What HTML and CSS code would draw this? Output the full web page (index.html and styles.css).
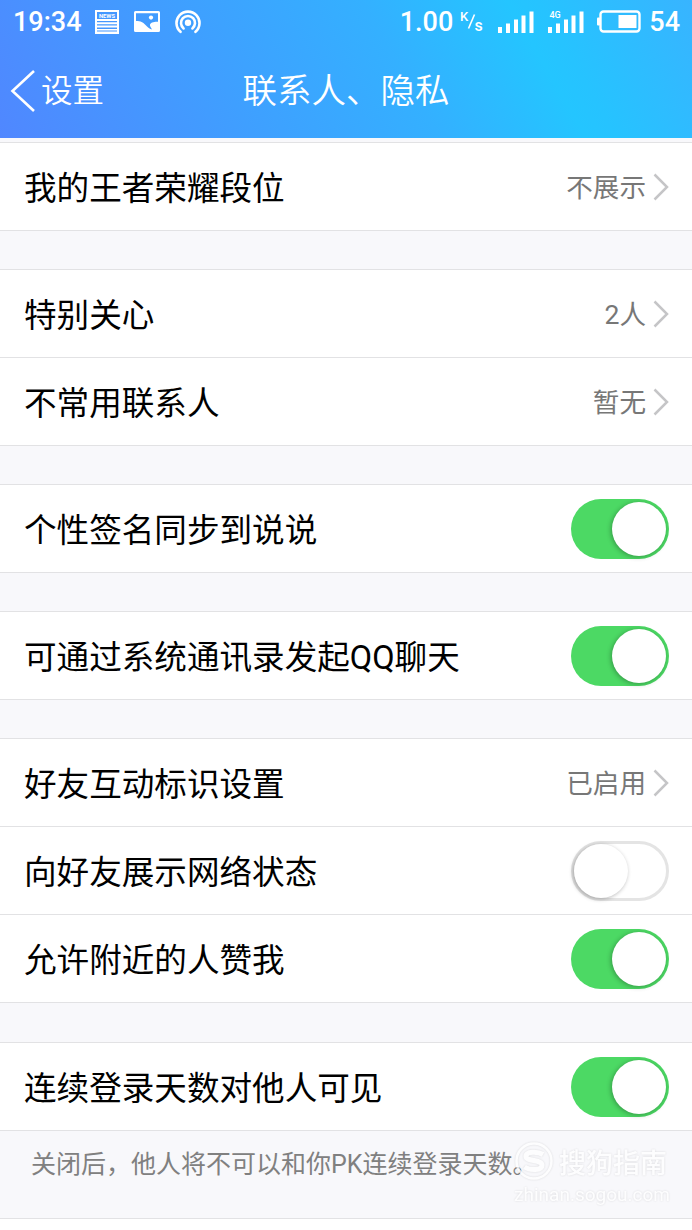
FILE: index.html
```html
<!DOCTYPE html>
<html lang="zh-CN">
<head>
  <meta charset="UTF-8" />
  <meta name="viewport" content="width=device-width, initial-scale=1.0"/>
  <title>联系人、隐私</title>
  <link rel="stylesheet" href="styles.css">
</head>
<body>
  <header class="header">
    <div class="status-bar">
      <div class="status-left">
        <span class="time">19:34</span>
        <svg class="icon-news" width="24" height="24" viewBox="0 0 24 24">
          <path fill="#fff" fill-rule="evenodd" d="M0 0h24v24H0zM2 2v7h20V2zM2 11v1.300h20v-1.300zM2 14.300v1.300h20v-1.300zM2 17.600v1.300h20v-1.300zM2 20.600v1h20v-1z"/>
          <text class="news-text" x="12" y="7.800" text-anchor="middle" textLength="16" lengthAdjust="spacingAndGlyphs">NEWS</text>
        </svg>
        <svg class="icon-picture" width="26" height="21" viewBox="0 0 26 21">
          <path fill="#fff" fill-rule="evenodd" d="M1.500 0h23q1.500 0 1.500 1.500v18q0 1.500-1.500 1.500h-23q-1.500 0-1.500-1.500v-18q0-1.500 1.500-1.500zM2 2.200v7.800C7 10 9 11.500 11 13.500C13 15.500 15 18 18 18.500C17 16 15.500 15 16 13.500C17 11 21 10.700 24 10.700V2.200z"/>
          <circle cx="17" cy="6.600" r="2.100" fill="#fff"/>
        </svg>
        <svg class="icon-cast" width="26" height="26" viewBox="0 0 26 26" fill="none" stroke="#fff" stroke-width="2.600" stroke-linecap="round">
          <path d="M5.500 22.800A11.500 11.500 0 1 1 20.500 22.800"/>
          <path d="M8.600 19.400A7 7 0 1 1 17.400 19.400"/>
          <circle cx="13" cy="13.800" r="3.200" fill="#fff" stroke="none"/>
        </svg>
      </div>
      <div class="status-right">
        <span class="speed">1.00</span>
        <svg class="unit" width="24" height="24" viewBox="0 0 24 24">
          <text x="0" y="10.500">K</text>
          <path d="M14.500 4.500L8.500 18.500" stroke="#fff" stroke-width="1.600"/>
          <text x="14.500" y="20.500" class="unit-s">s</text>
        </svg>
        <svg class="signal" width="36" height="24" viewBox="0 0 36 24" fill="#fff">
          <rect x="0" y="17" width="4" height="6"/>
          <rect x="8" y="13.500" width="4" height="9.500"/>
          <rect x="16" y="9.500" width="4" height="13.500"/>
          <rect x="23.500" y="5.500" width="4" height="17.500"/>
          <rect x="31.500" y="1.500" width="4" height="21.500"/>
        </svg>
        <svg class="signal signal-4g" width="36" height="24" viewBox="0 0 36 24" fill="#fff">
          <rect x="0" y="17" width="4" height="6"/>
          <rect x="8" y="13.500" width="4" height="9.500"/>
          <rect x="16" y="9.500" width="4" height="13.500"/>
          <rect x="23.500" y="5.500" width="4" height="17.500"/>
          <rect x="31.500" y="1.500" width="4" height="21.500"/>
          <text x="1.500" y="8">4G</text>
        </svg>
        <svg class="battery" width="44" height="23" viewBox="0 0 44 23">
          <rect x="3.500" y="1.500" width="39" height="20" rx="3" fill="none" stroke="#fff" stroke-width="2.400"/>
          <rect x="0" y="7.500" width="3" height="8" rx="1" fill="#fff"/>
          <rect x="21.500" y="5" width="18" height="13" fill="#fff"/>
        </svg>
        <span class="percent">54</span>
      </div>
    </div>
    <nav class="nav-bar">
      <div class="back">
        <svg width="26" height="42" viewBox="0 0 26 42" fill="none" stroke="#fff" stroke-width="2.600">
          <path d="M24 1L2.500 21L24 41"/>
        </svg>
        <span class="back-text">设置</span>
      </div>
      <h1 class="title">联系人、隐私</h1>
    </nav>
  </header>

  <main class="settings">
    <section class="group">
      <div class="row">
        <span class="label">我的王者荣耀段位</span>
        <span class="value">不展示</span>
        <svg class="arrow" width="16" height="28" viewBox="0 0 16 28"><path d="M1.500 1.500L14 14L1.500 26.500"/></svg>
      </div>
    </section>

    <section class="group">
      <div class="row">
        <span class="label">特别关心</span>
        <span class="value">2人</span>
        <svg class="arrow" width="16" height="28" viewBox="0 0 16 28"><path d="M1.500 1.500L14 14L1.500 26.500"/></svg>
      </div>
      <div class="row">
        <span class="label">不常用联系人</span>
        <span class="value">暂无</span>
        <svg class="arrow" width="16" height="28" viewBox="0 0 16 28"><path d="M1.500 1.500L14 14L1.500 26.500"/></svg>
      </div>
    </section>

    <section class="group">
      <div class="row">
        <span class="label">个性签名同步到说说</span>
        <span class="switch on"><span class="knob"></span></span>
      </div>
    </section>

    <section class="group">
      <div class="row">
        <span class="label">可通过系统通讯录发起QQ聊天</span>
        <span class="switch on"><span class="knob"></span></span>
      </div>
    </section>

    <section class="group">
      <div class="row">
        <span class="label">好友互动标识设置</span>
        <span class="value">已启用</span>
        <svg class="arrow" width="16" height="28" viewBox="0 0 16 28"><path d="M1.500 1.500L14 14L1.500 26.500"/></svg>
      </div>
      <div class="row">
        <span class="label">向好友展示网络状态</span>
        <span class="switch"><span class="knob"></span></span>
      </div>
      <div class="row">
        <span class="label">允许附近的人赞我</span>
        <span class="switch on"><span class="knob"></span></span>
      </div>
    </section>

    <section class="group">
      <div class="row">
        <span class="label">连续登录天数对他人可见</span>
        <span class="switch on"><span class="knob"></span></span>
      </div>
    </section>
  </main>

  <footer class="note">
    <p class="note-text">关闭后，他人将不可以和你PK连续登录天数。</p>
    <div class="watermark">
      <div class="brand">
        <svg width="40" height="40" viewBox="0 0 40 40" fill="none" stroke="#fff">
          <circle cx="20" cy="20" r="17.500" stroke-width="2.500"/>
          <path d="M29 13.500C24 10.500 12 10 12 15.500C12 20.500 28 18.500 28 24C28 30 16 29.500 10.500 26" stroke-width="5"/>
        </svg>
        <span>搜狗指南</span>
      </div>
      <div class="site">zhinan.sogou.com</div>
    </div>
  </footer>
</body>
</html>
```
FILE: styles.css
```css
* {
  box-sizing: border-box;
}

body {
  margin: 0;
  background-color: #fff;
  font-family: Roboto, 'Noto Sans CJK SC', sans-serif;
  color: #000;
}

.header {
  height: 138px;
  background: linear-gradient(60deg, #5087ff 0%, #3f9fff 33%, #34b0ff 57%, #24c5ff 76%, #26c3ff 80%, #38b4ff 100%);
  color: #fff;
}

.status-bar {
  height: 43px;
  padding: 0 12px 0 13px;
  display: flex;
  justify-content: space-between;
  align-items: center;
  font-size: 27px;
  font-weight: 500;
}

.status-left,
.status-right {
  display: flex;
  align-items: center;
}

.icon-news {
  margin-left: 13px;
}

.icon-picture {
  margin-left: 15px;
}

.icon-cast {
  margin-left: 15px;
}

.news-text {
  font-size: 6px;
  font-weight: 700;
  fill: #fff;
}

.unit {
  margin-left: 7px;
  font-size: 13px;
  fill: #fff;
}

.unit-s {
  font-size: 16px;
}

.signal {
  margin-left: 14px;
}

.signal-4g {
  font-size: 9px;
}

.battery {
  margin: 0 8px 0 13px;
}

/* equal side columns keep the title centred */
.nav-bar {
  height: 95px;
  display: grid;
  grid-template-columns: 1fr auto 1fr;
  align-items: center;
}

.back {
  display: flex;
  align-items: center;
  gap: 5px;
  padding-left: 10px;
  font-size: 31.5px;
  font-weight: 350;
}

.back-text,
.title {
  padding-bottom: 5px;
}

.title {
  margin: 0;
  font-size: 34.5px;
  font-weight: 350;
}

.settings {
  padding-top: 4px;
  background-color: #f8f8fb;
}

.group {
  margin-bottom: 38px;
  border-top: 1px solid #e2e2e4;
  background-color: #fff;
}

.group:last-child {
  margin-top: 39px;
  margin-bottom: 0;
}

.row {
  height: 88px;
  padding: 0 23px 0 24px;
  display: flex;
  align-items: center;
  border-bottom: 1px solid #e2e2e4;
}

.label {
  flex: 1;
  padding-bottom: 3px;
  font-size: 32.6px;
}

.value {
  padding-bottom: 2px;
  font-size: 26.6px;
  color: #777;
}

.arrow {
  margin-left: 7px;
  fill: none;
  stroke: #c5c5c7;
  stroke-width: 2.5;
}

.switch {
  width: 98px;
  height: 60px;
  padding: 3px;
  display: flex;
  align-items: center;
  border: 3px solid #e4e4e4;
  border-radius: 30px;
}

.knob {
  flex: none;
  width: 54px;
  height: 54px;
  margin-left: -3px;
  border-radius: 50%;
  background-color: #fff;
  box-shadow: -1px 1px 4px rgba(0, 0, 0, 0.3);
}

.switch.on {
  justify-content: flex-end;
  border: none;
  background-color: #4cd964;
}

.switch.on .knob {
  margin: 0;
  box-shadow: -1px 1px 5px rgba(0, 0, 0, 0.3);
}

.note {
  position: relative;
  height: 88px;
  padding: 16px 31px;
  background-color: #f8f8fb;
  border-bottom: 1px solid #e2e2e4;
}

.note-text {
  margin: 0;
  font-size: 25px;
  line-height: 36px;
  color: #808080;
}

.watermark {
  position: absolute;
  top: 10px;
  right: 22px;
  color: #fff;
  opacity: 0.75;
  filter: drop-shadow(0 0 1px rgba(0, 0, 0, 0.16));
}

.brand {
  display: flex;
  align-items: center;
  gap: 5px;
  height: 40px;
  font-size: 27px;
  font-weight: 500;
}

.site {
  font-size: 19px;
  line-height: 28px;
}
```
